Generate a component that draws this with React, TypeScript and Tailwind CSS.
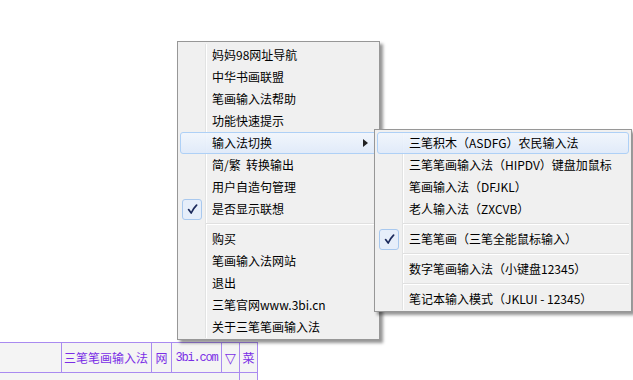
import React from "react";

type Item =
  | { kind: "item"; label: string; checked?: boolean; hl?: boolean; arrow?: boolean }
  | { kind: "sep" };

const mainItems: Item[] = [
  { kind: "item", label: "妈妈98网址导航" },
  { kind: "item", label: "中华书画联盟" },
  { kind: "item", label: "笔画输入法帮助" },
  { kind: "item", label: "功能快速提示" },
  { kind: "item", label: "输入法切换", hl: true, arrow: true },
  { kind: "item", label: "简/繁  转换输出" },
  { kind: "item", label: "用户自造句管理" },
  { kind: "item", label: "是否显示联想", checked: true },
  { kind: "sep" },
  { kind: "item", label: "购买" },
  { kind: "item", label: "笔画输入法网站" },
  { kind: "item", label: "退出" },
  { kind: "item", label: "三笔官网www.3bi.cn" },
  { kind: "item", label: "关于三笔笔画输入法" },
];

const subItems: Item[] = [
  { kind: "item", label: "三笔积木（ASDFG）农民输入法", hl: true },
  { kind: "item", label: "三笔笔画输入法（HIPDV）键盘加鼠标" },
  { kind: "item", label: "笔画输入法（DFJKL）" },
  { kind: "item", label: "老人输入法（ZXCVB）" },
  { kind: "sep" },
  { kind: "item", label: "三笔笔画（三笔全能鼠标输入）", checked: true },
  { kind: "sep" },
  { kind: "item", label: "数字笔画输入法（小键盘12345）" },
  { kind: "sep" },
  { kind: "item", label: "笔记本输入模式（JKLUI - 12345）" },
];

function Check() {
  return (
    <div className="flex h-[21px] w-[20px] items-center justify-center rounded-[3px] border border-[#a8c8ee] bg-[#e6eefa]">
      <svg width="11" height="11" viewBox="0 0 11 11">
        <path
          d="M1.6 5.6 L4.2 9 C5.6 6 7.4 3.4 9.6 1.2"
          fill="none"
          stroke="#1c2a5c"
          strokeWidth="1.7"
          strokeLinecap="round"
          strokeLinejoin="round"
        />
      </svg>
    </div>
  );
}

function Menu({ items, className }: { items: Item[]; className: string }) {
  return (
    <div
      className={
        "absolute border border-[#979797] bg-[#f0f0f0] px-[2px] pt-[2px] pb-[1px] shadow-[3px_3px_3px_rgba(0,0,0,0.42)] " +
        className
      }
    >
      <div className="absolute top-[2px] bottom-[1px] left-[27px] w-px bg-[#e2e3e3]" />
      <div className="absolute top-[2px] bottom-[1px] left-[28px] w-px bg-[#ffffff]" />
      {items.map((it, i) =>
        it.kind === "sep" ? (
          <div key={i} className="relative flex h-[8px] items-center pl-[26px]">
            <div className="w-full">
              <div className="h-px bg-[#e0e0e0]" />
              <div className="h-px bg-[#ffffff]" />
            </div>
          </div>
        ) : (
          <div
            key={i}
            className={
              "relative flex h-[22px] items-center rounded-[3px] border text-[12px] leading-none text-black " +
              (it.hl
                ? "border-[#aed0f6] bg-gradient-to-b from-[#f1f6fd]/90 to-[#dfeafa]/90"
                : "border-transparent")
            }
          >
            <div className="flex w-[31px] shrink-0 items-center pl-px">
              {it.checked ? <Check /> : null}
            </div>
            <span className="whitespace-pre">{it.label}</span>
            {it.arrow ? (
              <svg className="ml-auto mr-[8px]" width="5" height="8" viewBox="0 0 5 8">
                <path d="M0 0 L5 4 L0 8 Z" fill="#222" />
              </svg>
            ) : null}
          </div>
        )
      )}
    </div>
  );
}

export default function App() {
  return (
    <div
      className="relative flex h-[380px] w-[633px] flex-col overflow-hidden bg-white"
      style={{ fontFamily: '"Noto Sans CJK SC", "Microsoft YaHei", sans-serif' }}
    >
      <div className="flex-1" />
      <div className="flex h-[31px] w-[258px] border-t border-b border-[#a98af0] bg-[#f4f4f4] text-[12px] leading-none text-[#7a2ee6]">
        <div className="w-[61px]" />
        <div className="flex w-[90px] items-center border-l border-[#a98af0] pl-[2px]">三笔笔画输入法</div>
        <div className="flex w-[20px] items-center justify-center border-l border-[#a98af0]">网</div>
        <div
          className="flex w-[50px] items-center justify-center border-l border-[#a98af0] text-[12px] tracking-[-1.2px]"
          style={{ fontFamily: '"Liberation Mono", monospace' }}
        >
          3bi.com
        </div>
        <div
          className="flex w-[18px] items-center justify-center border-l border-[#a98af0] text-[14px]"
          style={{ fontFamily: '"DejaVu Sans", sans-serif' }}
        >
          ▽
        </div>
        <div className="flex w-[19px] items-center justify-center border-l border-r border-[#a98af0]">菜</div>
      </div>
      <div className="flex h-[7px] w-[258px] bg-[#f4f4f4]">
        <div className="w-[239px]" />
        <div className="w-[19px] border-l border-r border-[#a98af0]" />
      </div>

      <Menu items={mainItems} className="left-[177px] top-[41px] w-[203px]" />
      <Menu items={subItems} className="left-[374px] top-[129px] w-[258px]" />
    </div>
  );
}
